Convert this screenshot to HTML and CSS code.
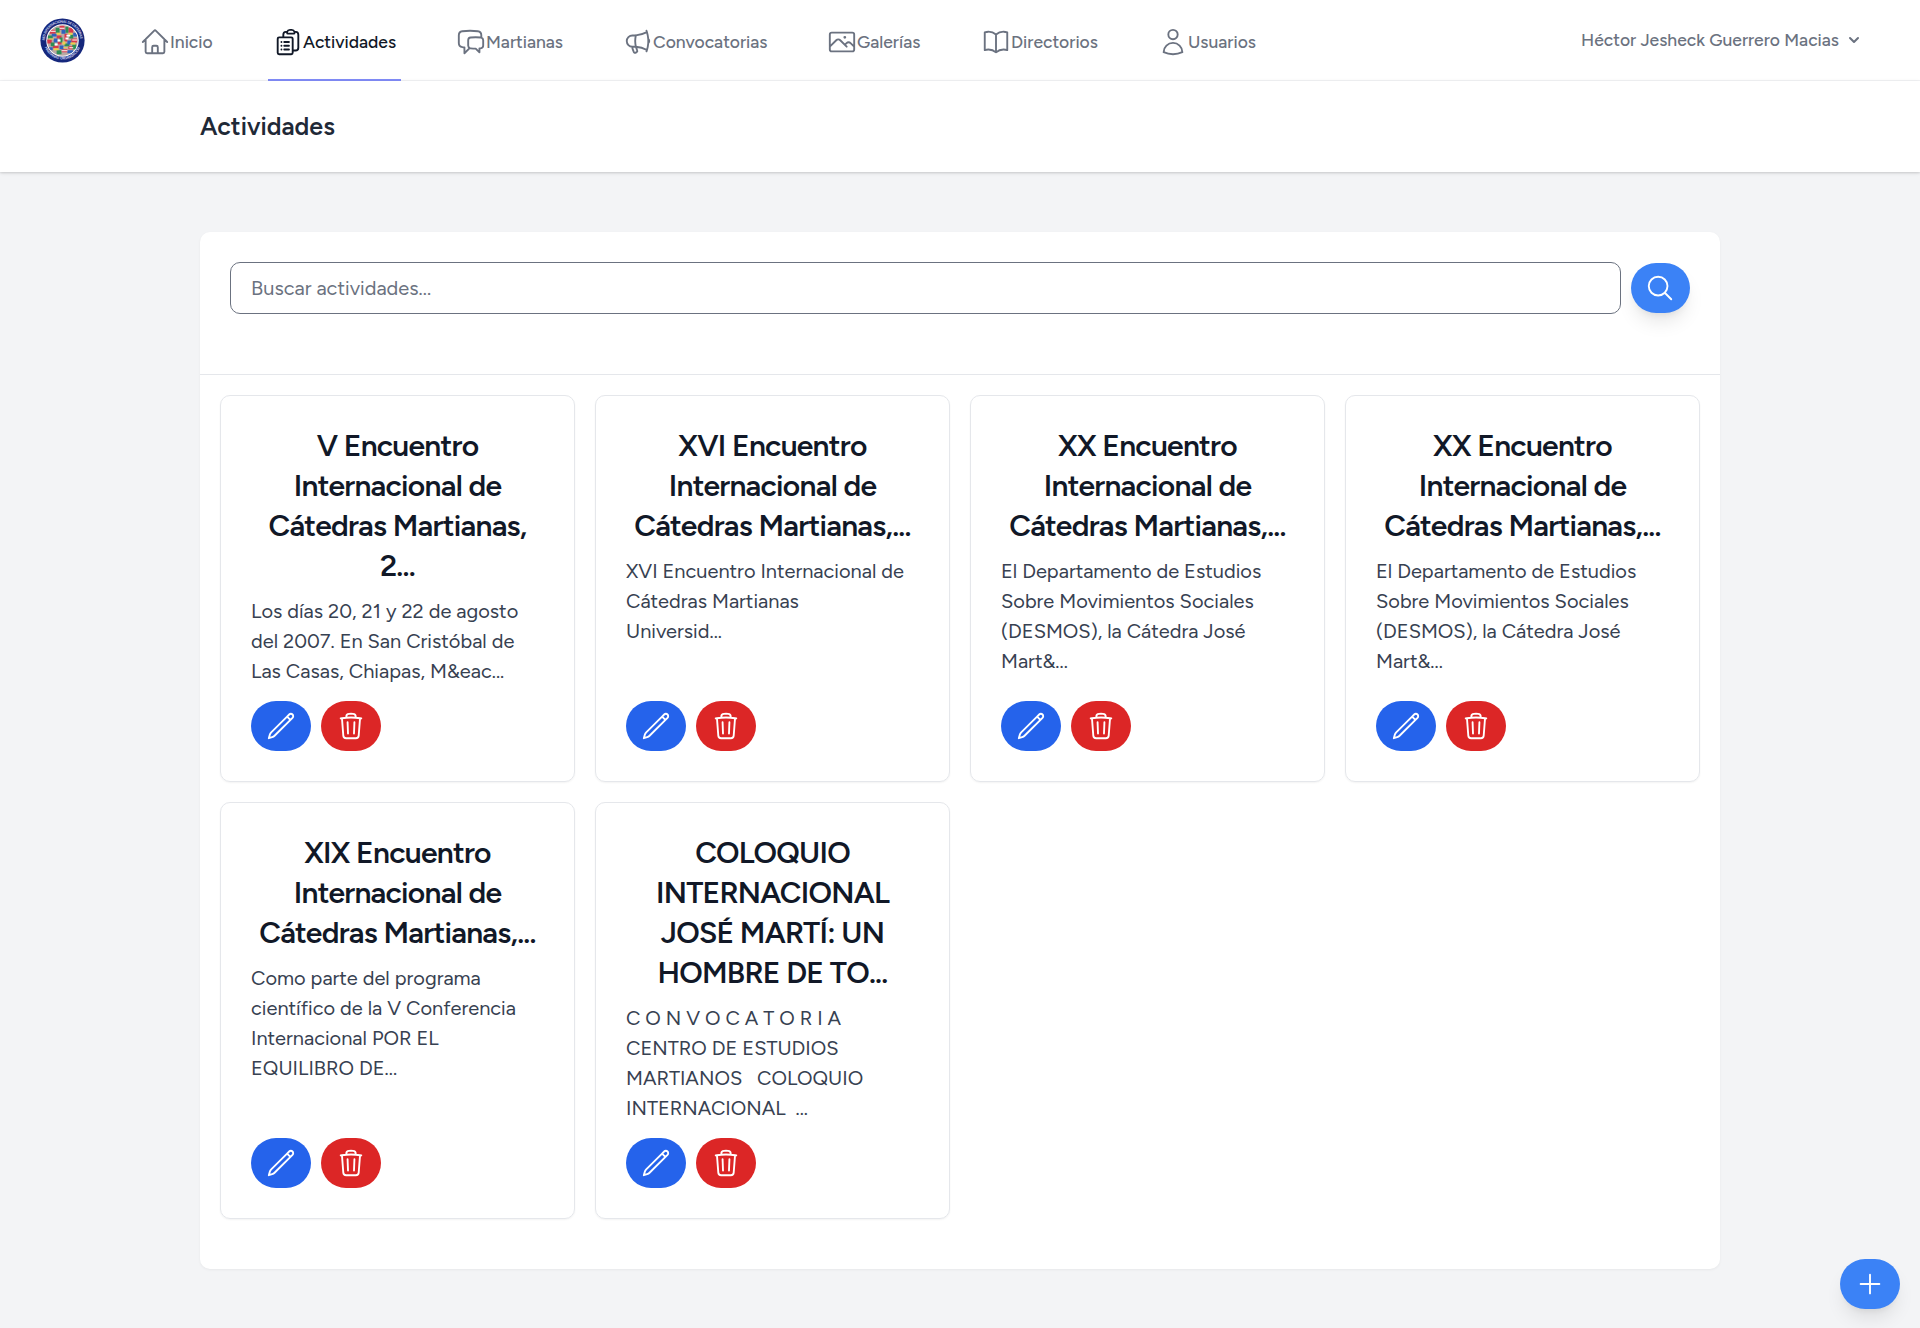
FILE: index.html
```html
<!DOCTYPE html>
<html lang="es">
<head>
<meta charset="utf-8">
<title>Actividades</title>
<link rel="stylesheet" href="styles.css">
</head>
<body>
<svg class="defs" aria-hidden="true">
  <symbol id="pencil" viewBox="0 0 24 24"><path d="m16.862 4.487 1.687-1.688a1.875 1.875 0 1 1 2.652 2.652L6.832 19.82a4.5 4.5 0 0 1-1.897 1.13l-2.685.8.8-2.685a4.5 4.5 0 0 1 1.13-1.897L16.863 4.487Zm0 0L19.5 7.125"/></symbol>
  <symbol id="trash" viewBox="0 0 24 24"><path d="m14.74 9-.346 9m-4.788 0L9.26 9m9.968-3.21c.342.052.682.107 1.022.166m-1.022-.165L18.16 19.673a2.25 2.25 0 0 1-2.244 2.077H8.084a2.25 2.25 0 0 1-2.244-2.077L4.772 5.79m14.456 0a48.108 48.108 0 0 0-3.478-.397m-12 .562c.34-.059.68-.114 1.022-.165m0 0a48.11 48.11 0 0 1 3.478-.397m7.5 0v-.916c0-1.18-.91-2.164-2.09-2.201a51.964 51.964 0 0 0-3.32 0c-1.18.037-2.09 1.022-2.09 2.201v.916m7.5 0a48.667 48.667 0 0 0-7.5 0"/></symbol>
</svg>
<nav class="topbar">
  <svg class="logo" viewBox="0 0 46 46">
    <defs><clipPath id="globe"><circle cx="23" cy="23" r="15.6"/></clipPath>
    <path id="ring-top" d="M4.8 23a18.2 18.2 0 0 1 36.4 0"/><path id="ring-bottom" d="M3.6 23a19.4 19.4 0 0 0 38.8 0"/></defs>
    <circle cx="23" cy="23" r="22.6" fill="#15277c"/>
    <circle cx="23" cy="23" r="16.6" fill="#fff"/>
    <g clip-path="url(#globe)">
      <path fill="#b9a9a5" d="M7 7h32v32H7z"/>
      <path fill="#d8394b" d="M10 12h6v4h-6zM20 8h5v4h-5zM29 10h5v5h-5zM7 22h5v4H7zM17 18h5v3h-5zM25 16h3v8h-3zM32 21h6v4h-6zM13 28h6v3h-6zM22 32h6v3h-6zM29 29h5v3h-5zM18 24h4v3h-4z"/>
      <path fill="#2c8f54" d="M16 10h4v5h-4zM26 9h3v6h-3zM8 18h5v3H8zM20 20h3v5h-3zM30 17h4v4h-4zM11 25h4v4h-4zM25 26h5v3h-5zM17 33h5v4h-5zM33 27h4v5h-4z"/>
      <path fill="#2f62bd" d="M12 16h5v3h-5zM22 12h4v4h-4zM34 15h4v4h-4zM14 21h4v4h-4zM28 23h4v4h-4zM20 28h4v4h-4zM28 33h6v3h-6zM9 30h4v3H9z"/>
      <path fill="#f0cf4a" d="M17 15h4v2h-4zM29 15h4v2h-4zM9 21h5v1H9zM23 24h3v3h-3zM31 25h5v2h-5zM14 31h5v2h-5zM24 30h4v1h-4z"/>
      <path fill="#fff" d="M10 13h6v1h-6zM20 10h5v1h-5zM27 17h4v2h-4zM18 22h3v2h-3zM33 22h5v1h-5zM15 26h3v2h-3zM22 33h6v1h-6zM26 20h3v2h-3zM30 30h4v1h-4z"/>
    </g>
    <g class="ring-text"><text><textPath href="#ring-top" textLength="55">RED INTERNACIONAL DE CÁTEDRAS</textPath></text><text><textPath href="#ring-bottom" startOffset="7" textLength="46">MARTIANAS · ORGANIZACIÓN</textPath></text></g>
  </svg>
  <div class="links">
    <a class="link"><svg class="icon" viewBox="0 0 24 24"><path d="m2.25 12 8.954-8.955c.44-.439 1.152-.439 1.591 0L21.75 12M4.5 9.75v10.125c0 .621.504 1.125 1.125 1.125H9.75v-4.875c0-.621.504-1.125 1.125-1.125h2.25c.621 0 1.125.504 1.125 1.125V21h4.125c.621 0 1.125-.504 1.125-1.125V9.75M8.25 21h8.25"/></svg><span>Inicio</span></a>
    <a class="link active"><svg class="icon" viewBox="0 0 24 24"><path d="M9 12h3.75M9 15h3.75M9 18h3.75m3 .75H18a2.25 2.25 0 0 0 2.25-2.25V6.108c0-1.135-.845-2.098-1.976-2.192a48.424 48.424 0 0 0-1.123-.08m-5.801 0c-.065.21-.1.433-.1.664 0 .414.336.75.75.75h4.5a.75.75 0 0 0 .75-.75 2.25 2.25 0 0 0-.1-.664m-5.8 0A2.251 2.251 0 0 1 13.5 2.25H15c1.012 0 1.867.668 2.15 1.586m-5.8 0c-.376.023-.75.05-1.124.08C9.095 4.01 8.25 4.973 8.25 6.108V8.25m0 0H4.875c-.621 0-1.125.504-1.125 1.125v11.25c0 .621.504 1.125 1.125 1.125h9.75c.621 0 1.125-.504 1.125-1.125V9.375c0-.621-.504-1.125-1.125-1.125H8.25ZM6.75 12h.008v.008H6.75V12Zm0 3h.008v.008H6.75V15Zm0 3h.008v.008H6.75V18Z"/></svg><span>Actividades</span></a>
    <a class="link"><svg class="icon" viewBox="0 0 24 24"><path d="M20.25 8.511c.884.284 1.5 1.128 1.5 2.097v4.286c0 1.136-.847 2.1-1.98 2.193-.34.027-.68.052-1.02.072v3.091l-3-3c-1.354 0-2.694-.055-4.02-.163a2.115 2.115 0 0 1-.825-.242m9.345-8.334a2.126 2.126 0 0 0-.476-.095 48.64 48.64 0 0 0-8.048 0c-1.131.094-1.976 1.057-1.976 2.192v4.286c0 .837.46 1.58 1.155 1.951m9.345-8.334V6.637c0-1.621-1.152-3.026-2.76-3.235A48.455 48.455 0 0 0 11.25 3c-2.115 0-4.198.137-6.24.402-1.608.209-2.76 1.614-2.76 3.235v6.226c0 1.621 1.152 3.026 2.76 3.235.577.075 1.157.14 1.74.194V21l4.155-4.155"/></svg><span>Martianas</span></a>
    <a class="link"><svg class="icon" viewBox="0 0 24 24"><path d="M10.34 15.84c-.688-.06-1.386-.09-2.09-.09H7.5a4.5 4.5 0 1 1 0-9h.75c.704 0 1.402-.03 2.09-.09m0 9.18c.253.962.584 1.892.985 2.783.247.55.06 1.21-.463 1.511l-.657.38c-.551.318-1.26.117-1.527-.461a20.845 20.845 0 0 1-1.44-4.282m3.102.069a18.03 18.03 0 0 1-.59-4.59c0-1.586.205-3.124.59-4.59m0 9.18a23.848 23.848 0 0 1 8.835 2.535M10.34 6.66a23.847 23.847 0 0 0 8.835-2.535m0 0A23.74 23.74 0 0 0 18.795 3m.38 1.125a23.91 23.91 0 0 1 1.014 5.395m-1.014 8.855c-.118.38-.245.754-.38 1.125m.38-1.125a23.91 23.91 0 0 0 1.014-5.395m0-3.46c.495.413.811 1.035.811 1.73 0 .695-.316 1.317-.811 1.73m0-3.46a24.347 24.347 0 0 1 0 3.46"/></svg><span>Convocatorias</span></a>
    <a class="link"><svg class="icon" viewBox="0 0 24 24"><path d="m2.25 15.75 5.159-5.159a2.25 2.25 0 0 1 3.182 0l5.159 5.159m-1.5-1.5 1.409-1.409a2.25 2.25 0 0 1 3.182 0l2.909 2.909m-18 3.75h16.5a1.5 1.5 0 0 0 1.5-1.5V6a1.5 1.5 0 0 0-1.5-1.5H3.75A1.5 1.5 0 0 0 2.25 6v12a1.5 1.5 0 0 0 1.5 1.5Zm10.5-11.25h.008v.008h-.008V8.25Zm.375 0a.375.375 0 1 1-.75 0 .375.375 0 0 1 .75 0Z"/></svg><span>Galerías</span></a>
    <a class="link"><svg class="icon" viewBox="0 0 24 24"><path d="M12 6.042A8.967 8.967 0 0 0 6 3.75c-1.052 0-2.062.18-3 .512v14.25A8.987 8.987 0 0 1 6 18c2.305 0 4.408.867 6 2.292m0-14.25a8.966 8.966 0 0 1 6-2.292c1.052 0 2.062.18 3 .512v14.25A8.987 8.987 0 0 0 18 18a8.967 8.967 0 0 0-6 2.292m0-14.25v14.25"/></svg><span>Directorios</span></a>
    <a class="link"><svg class="icon" viewBox="0 0 24 24"><path d="M15.75 6a3.75 3.75 0 1 1-7.5 0 3.75 3.75 0 0 1 7.5 0ZM4.501 20.118a7.5 7.5 0 0 1 14.998 0A17.933 17.933 0 0 1 12 21.75c-2.676 0-5.216-.584-7.499-1.632Z"/></svg><span>Usuarios</span></a>
  </div>
  <div class="user"><span>Héctor Jesheck Guerrero Macias</span><svg class="chevron" viewBox="0 0 20 20"><path d="M5.293 7.293a1 1 0 011.414 0L10 10.586l3.293-3.293a1 1 0 111.414 1.414l-4 4a1 1 0 01-1.414 0l-4-4a1 1 0 010-1.414z"/></svg></div>
</nav>
<header class="page-header"><h1>Actividades</h1></header>
<main class="panel">
  <form class="search">
    <input class="search-input" type="text" placeholder="Buscar actividades...">
    <button class="pill search-btn" type="button" aria-label="Buscar"><svg class="icon" viewBox="0 0 24 24"><path d="m21 21-5.197-5.197m0 0A7.5 7.5 0 1 0 5.196 5.196a7.5 7.5 0 0 0 10.607 10.607Z"/></svg></button>
  </form>
  <section class="cards">
    <article class="card">
      <h2>V Encuentro<br>Internacional de<br>Cátedras Martianas,<br>2...</h2>
      <p>Los días 20, 21 y 22 de agosto<br>del 2007. En San Cristóbal de<br>Las Casas, Chiapas, M&amp;eac...</p>
      <div class="actions"><button class="pill edit" aria-label="Editar"><svg class="icon"><use href="#pencil"/></svg></button><button class="pill delete" aria-label="Eliminar"><svg class="icon"><use href="#trash"/></svg></button></div>
    </article>
    <article class="card">
      <h2>XVI Encuentro<br>Internacional de<br>Cátedras Martianas,...</h2>
      <p>XVI Encuentro Internacional de<br>Cátedras Martianas<br>Universid...</p>
      <div class="actions"><button class="pill edit" aria-label="Editar"><svg class="icon"><use href="#pencil"/></svg></button><button class="pill delete" aria-label="Eliminar"><svg class="icon"><use href="#trash"/></svg></button></div>
    </article>
    <article class="card">
      <h2>XX Encuentro<br>Internacional de<br>Cátedras Martianas,...</h2>
      <p>El Departamento de Estudios<br>Sobre Movimientos Sociales<br>(DESMOS), la Cátedra José<br>Mart&amp;...</p>
      <div class="actions"><button class="pill edit" aria-label="Editar"><svg class="icon"><use href="#pencil"/></svg></button><button class="pill delete" aria-label="Eliminar"><svg class="icon"><use href="#trash"/></svg></button></div>
    </article>
    <article class="card">
      <h2>XX Encuentro<br>Internacional de<br>Cátedras Martianas,...</h2>
      <p>El Departamento de Estudios<br>Sobre Movimientos Sociales<br>(DESMOS), la Cátedra José<br>Mart&amp;...</p>
      <div class="actions"><button class="pill edit" aria-label="Editar"><svg class="icon"><use href="#pencil"/></svg></button><button class="pill delete" aria-label="Eliminar"><svg class="icon"><use href="#trash"/></svg></button></div>
    </article>
    <article class="card">
      <h2>XIX Encuentro<br>Internacional de<br>Cátedras Martianas,...</h2>
      <p>Como parte del programa<br>científico de la V Conferencia<br>Internacional POR EL<br>EQUILIBRO DE...</p>
      <div class="actions"><button class="pill edit" aria-label="Editar"><svg class="icon"><use href="#pencil"/></svg></button><button class="pill delete" aria-label="Eliminar"><svg class="icon"><use href="#trash"/></svg></button></div>
    </article>
    <article class="card">
      <h2>COLOQUIO<br>INTERNACIONAL<br>JOSÉ MARTÍ: UN<br>HOMBRE DE TO...</h2>
      <p>C O N V O C A T O R I A<br>CENTRO DE ESTUDIOS<br>MARTIANOS &nbsp; COLOQUIO<br>INTERNACIONAL &nbsp;...</p>
      <div class="actions"><button class="pill edit" aria-label="Editar"><svg class="icon"><use href="#pencil"/></svg></button><button class="pill delete" aria-label="Eliminar"><svg class="icon"><use href="#trash"/></svg></button></div>
    </article>
  </section>
</main>
<button class="pill add" aria-label="Agregar"><svg class="icon" viewBox="0 0 24 24"><path d="M12 4.5v15m7.5-7.5h-15"/></svg></button>
</body>
</html>
```
FILE: styles.css
```css
* { box-sizing: border-box; margin: 0; }
body { min-height: 1328px; background: #f3f4f6; color: #111827; font: 400 20px/30px Figtree, Lato, "Open Sans", sans-serif; }
.defs { position: absolute; width: 0; height: 0; }
.icon { width: 30px; height: 30px; flex: none; fill: none; stroke: currentColor; stroke-width: 1.5; stroke-linecap: round; stroke-linejoin: round; }

.topbar { display: flex; height: 81px; padding: 0 56px 0 40px; background: #fff; border-bottom: 1px solid #f3f4f6; }
.logo { width: 45px; height: 45px; margin-top: 18px; }
.ring-text { fill: #c9d0ee; font-size: 3.6px; font-weight: 700; }
.links { display: grid; grid-template-columns: 83px 133px 117px 154px 104px 127px 108px; column-gap: 50px; margin-left: 50px; height: 81px; }
.link { display: flex; align-items: center; height: 81px; padding: 4px 5px 0; border-bottom: 2px solid transparent; color: #6b7280; font-size: 17.5px; font-weight: 500; white-space: nowrap; }
.link.active { color: #111827; border-color: #818cf8; }
.user { display: flex; align-items: center; gap: 5px; margin-left: auto; color: #6b7280; font-size: 17.5px; font-weight: 500; white-space: nowrap; }
.chevron { width: 20px; height: 20px; fill: currentColor; }

.page-header { position: relative; height: 91px; padding: 30px 200px; background: #fff; box-shadow: 0 1px 4px rgba(0,0,0,.1), 0 1px 2px rgba(0,0,0,.1); }
.page-header h1 { color: #1f2937; font-size: 25px; line-height: 31px; font-weight: 600; }

.panel { width: 1520px; height: 1037px; margin: 60px auto 59px; background: #fff; border-radius: 10px; box-shadow: 0 1px 3px rgba(0,0,0,.05); }
.search { display: flex; align-items: center; gap: 10px; height: 143px; padding: 30px 30px 60px; border-bottom: 1px solid #e5e7eb; }
.search-input { flex: 1; height: 52px; padding: 0 20px; border: 1px solid #6b7280; border-radius: 10px; background: #fff; font: inherit; color: #6b7280; }
.search-input::placeholder { color: #6b7280; opacity: 1; }

.pill { display: flex; align-items: center; justify-content: center; width: 60px; height: 50px; padding: 0; border: 0; border-radius: 25px; color: #fff; }
.search-btn { width: 59px; padding-right: 1px; background: #3b82f6; box-shadow: 0 12px 19px -4px rgba(0,0,0,.1), 0 5px 8px -5px rgba(0,0,0,.1); }
.edit { background: #2563eb; }
.delete { background: #dc2626; }
.add { position: fixed; right: 20px; bottom: 19px; background: #3b82f6; box-shadow: 0 12px 19px -4px rgba(0,0,0,.1), 0 5px 8px -5px rgba(0,0,0,.1); }

.cards { display: grid; grid-template-columns: repeat(4, 355px); grid-template-rows: 387px 417px; gap: 20px; padding: 20px; }
.card { display: flex; flex-direction: column; padding: 30px; border: 1px solid #e5e7eb; border-radius: 10px; box-shadow: 0 1px 2px rgba(0,0,0,.05); white-space: nowrap; }
.card h2 { margin-bottom: 10px; font-size: 30px; line-height: 40px; font-weight: 600; letter-spacing: -0.025em; text-align: center; }
.card p { color: #374151; }
.actions { display: flex; gap: 10px; margin-top: auto; }
```
